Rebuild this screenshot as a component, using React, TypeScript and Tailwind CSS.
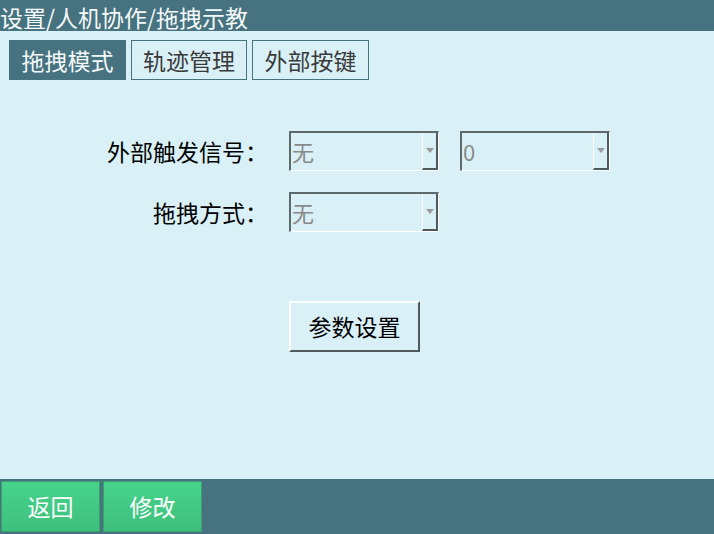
import React from 'react';

const font = { fontFamily: '"Noto Sans CJK SC", "Noto Sans", sans-serif' };

function Select({ value }: { value: string }) {
  return (
    <div className="flex h-[40px] w-[150px] border-t-2 border-l-2 border-t-[#5c6a6c] border-l-[#5c6a6c] border-b border-r border-b-white border-r-white">
      <div className="flex-1 pl-[1px] text-[22px] leading-[36px] text-[#8a8a8a]">{value}</div>
      <div className="flex w-[16px] items-center justify-center border-l border-l-white border-r-2 border-b-2 border-r-[#4f5a5c] border-b-[#4f5a5c]">
        <svg width="8" height="5" viewBox="0 0 8 5">
          <path d="M0 0 L8 0 L4 5 Z" fill="#9a9a9a" />
        </svg>
      </div>
    </div>
  );
}

export default function App() {
  const tabs = [
    { label: '拖拽模式', w: 'w-[117px]' },
    { label: '轨迹管理', w: 'w-[116px]' },
    { label: '外部按键', w: 'w-[117px]' },
  ];

  return (
    <div className="flex h-[534px] w-[714px] flex-col bg-[#d9f0f7]" style={font}>
      {/* Title bar */}
      <div className="h-[31px] bg-[#46737f] pt-[3px] text-[23px] leading-[28px] text-[#f4f8f9]">
        设置/人机协作/拖拽示教
      </div>

      {/* Tabs */}
      <div className="ml-[9px] mt-[9px] flex gap-[5px]">
        {tabs.map((t, i) => (
          <div
            key={t.label}
            className={
              i === 0
                ? `flex h-[40px] ${t.w} items-center justify-center bg-[#46737f] text-[23px] text-[#f4f8f9]`
                : `flex h-[40px] ${t.w} items-center justify-center border border-[#46737f] text-[23px] text-[#3a3a3a]`
            }
          >
            {t.label}
          </div>
        ))}
      </div>

      {/* Form */}
      <div className="mt-[51px] flex flex-col gap-[21px]">
        <div className="flex items-center">
          <div className="w-[268px] text-right text-[23px] text-black">外部触发信号：</div>
          <div className="ml-[21px] flex gap-[21px]">
            <Select value="无" />
            <Select value="0" />
          </div>
        </div>
        <div className="flex items-center">
          <div className="w-[268px] text-right text-[23px] text-black">拖拽方式：</div>
          <div className="ml-[21px]">
            <Select value="无" />
          </div>
        </div>
      </div>

      <div className="ml-[289px] mt-[69px]">
        <div className="flex h-[51px] w-[131px] items-center justify-center border-t-2 border-l-2 border-t-white border-l-white border-b-2 border-r-2 border-b-[#4f5a5c] border-r-[#4f5a5c] text-[23px] text-black">
          参数设置
        </div>
      </div>

      {/* Footer */}
      <div className="mt-auto flex h-[55px] gap-[3px] bg-[#46737f] pl-[1px] pt-[2px]">
        {['返回', '修改'].map((b) => (
          <div
            key={b}
            className="flex h-[51px] w-[99px] items-center justify-center border border-[#3a9f6f] bg-gradient-to-b from-[#47d38b] to-[#3ec07d] text-[23px] text-white"
          >
            {b}
          </div>
        ))}
      </div>
    </div>
  );
}
